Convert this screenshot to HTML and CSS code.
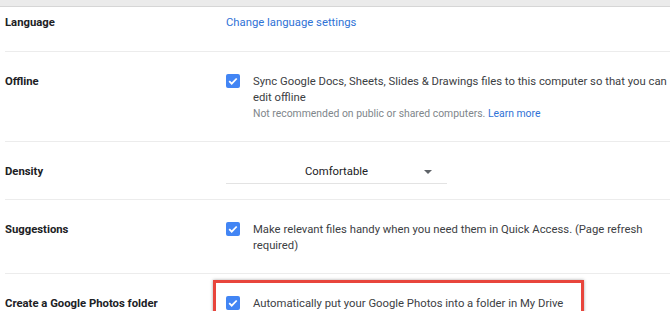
FILE: index.html
```html
<!DOCTYPE html>
<html lang="en">
<head>
    <meta charset="UTF-8">
    <title>Settings</title>
    <link rel="stylesheet" href="styles.css">
</head>
<body>
    <div class="topbar"></div>

    <div class="settings">
        <div class="row row-first">
            <div class="label">Language</div>
            <div class="value"><a class="link" href="#">Change language settings</a></div>
        </div>

        <div class="row">
            <div class="label">Offline</div>
            <div class="value check-line">
                <span class="checkbox">
                    <svg viewBox="0 0 14 14" width="14" height="14"><path d="M3.2 7.2l2.5 2.5 5-5.2" fill="none" stroke="#fff" stroke-width="1.8"/></svg>
                </span>
                <div class="check-text">
                    Sync Google Docs, Sheets, Slides &amp; Drawings files to this computer so that you can edit offline
                    <div class="hint">Not recommended on public or shared computers. <a class="link" href="#">Learn more</a></div>
                </div>
            </div>
        </div>

        <div class="row row-density">
            <div class="label">Density</div>
            <div class="value">
                <div class="select">
                    <span>Comfortable</span>
                    <span class="arrow"></span>
                </div>
            </div>
        </div>

        <div class="row">
            <div class="label">Suggestions</div>
            <div class="value check-line">
                <span class="checkbox">
                    <svg viewBox="0 0 14 14" width="14" height="14"><path d="M3.2 7.2l2.5 2.5 5-5.2" fill="none" stroke="#fff" stroke-width="1.8"/></svg>
                </span>
                <div class="check-text">Make relevant files handy when you need them in Quick Access. (Page refresh required)</div>
            </div>
        </div>

        <div class="row row-last">
            <div class="label">Create a Google Photos folder</div>
            <div class="value check-line">
                <span class="checkbox">
                    <svg viewBox="0 0 14 14" width="14" height="14"><path d="M3.2 7.2l2.5 2.5 5-5.2" fill="none" stroke="#fff" stroke-width="1.8"/></svg>
                </span>
                <div class="check-text">Automatically put your Google Photos into a folder in My Drive</div>
            </div>
            <!-- highlight drawn over the option -->
            <div class="highlight"></div>
        </div>
    </div>
</body>
</html>
```

FILE: styles.css
```css
body {
    margin: 0;
    background: #fff;
    font-family: Roboto, "Liberation Sans", Arial, sans-serif;
    font-size: 11.3px;
    color: #3c4043;
    overflow: hidden;
}

.topbar {
    height: 6px;
    background: #ebebeb;
    border-bottom: 1px solid #d6d6d6;
}

.settings {
    padding-left: 5px;
}

.row {
    position: relative;
    display: grid;
    grid-template-columns: 221px 1fr;
    padding: 22px 0 19px;
    border-bottom: 1px solid #ececec;
    line-height: 16px;
}

.row-first {
    padding: 8px 0 20px;
}

.row-density {
    padding: 22px 0 15px;
}

.row-last {
    border-bottom: none;
}

.label {
    font-weight: bold;
    font-size: 11.3px;
    color: #202124;
}

.link {
    color: #2f72d6;
    text-decoration: none;
}

.check-line {
    display: flex;
    gap: 13px;
}

.checkbox {
    flex: none;
    width: 14px;
    height: 14px;
    margin-top: 0;
    border-radius: 2px;
    background: #4285f4;
    display: flex;
}

.check-text {
    padding-right: 2px;
}

.hint {
    font-size: 10.4px;
    color: #80868b;
}

.select {
    position: relative;
    width: 221px;
    text-align: center;
    padding-bottom: 3px;
    border-bottom: 1px solid #e3e3e3;
    color: #202124;
}

.arrow {
    position: absolute;
    right: 15px;
    top: 6px;
    border-left: 4px solid transparent;
    border-right: 4px solid transparent;
    border-top: 4px solid #5f6368;
}

.highlight {
    position: absolute;
    left: 208px;
    top: 6px;
    width: 365px;
    height: 60px;
    border: 3px solid #e8453c;
    box-shadow: 0 0 3px rgba(0, 0, 0, 0.35);
}
```
